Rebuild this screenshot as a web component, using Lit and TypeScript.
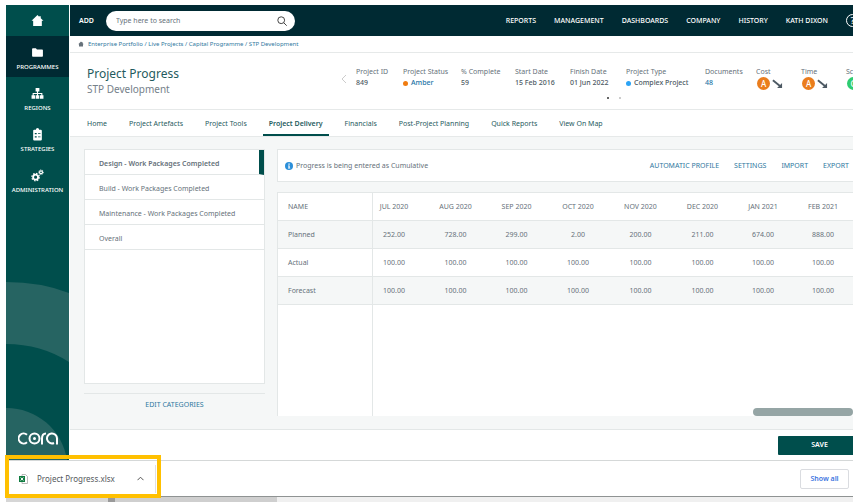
import { LitElement, html, css, svg } from "lit";
import { customElement } from "lit/decorators.js";

const homeIcon = html`<svg class="home" viewBox="0 0 24 24" aria-hidden="true"><path d="M12 2 1 12.500h3V22h16v-9.500h3L18 7.700V4h-3v1z" fill="currentColor"/></svg>`;

const icons: Record<string, unknown> = {
  PROGRAMMES: svg`<path d="M2 5.500Q2 4 3.500 4H9l2 2.500h9.500Q22 6.500 22 8v10.500q0 1.500-1.500 1.500h-17Q2 20 2 18.500z"/>`,
  REGIONS: svg`<path d="M8.500 2h7v6.500h-2.500V11h8v4h2v6.500h-6.500V15H19v-2h-6v2h2.300v6.500H8.700V15H11v-2H5v2h2.500v6.500H1V15h2v-4h8V8.500H8.500z"/>`,
  STRATEGIES: svg`<path fill-rule="evenodd" d="M6 3h3a3 3 0 0 1 6 0h3q2 0 2 2v16q0 2-2 2H6q-2 0-2-2V5q0-2 2-2zM7 9v2.500h3.500V9zM13 9.500V11h4.500V9.500zM7 15v2.500h3.500V15zM13 15.500V17h4.500v-1.500z"/>`,
  ADMINISTRATION: svg`<circle cx="8.500" cy="15" r="4.600" fill="none" stroke="currentColor" stroke-width="3.400"/><circle cx="8.500" cy="15" r="7" fill="none" stroke="currentColor" stroke-width="2.200" stroke-dasharray="2.750 2.750"/><circle cx="18.500" cy="6" r="2.700" fill="none" stroke="currentColor" stroke-width="2.300"/><circle cx="18.500" cy="6" r="4.400" fill="none" stroke="currentColor" stroke-width="1.600" stroke-dasharray="1.730 1.730"/>`,
};

const trend = html`<svg class="trend" viewBox="0 0 12 12" aria-hidden="true"><path d="M1 2.500 9 9" stroke="#4c5963" stroke-width="2" fill="none"/><path d="M11 5.500V11H5.500z" fill="#4c5963"/></svg>`;

const months = [
  { label: "JUL 2020", planned: "252.00", width: 52 },
  { label: "AUG 2020", planned: "728.00", width: 61 },
  { label: "SEP 2020", planned: "299.00", width: 61 },
  { label: "OCT 2020", planned: "2.00", width: 62 },
  { label: "NOV 2020", planned: "200.00", width: 63 },
  { label: "DEC 2020", planned: "211.00", width: 61 },
  { label: "JAN 2021", planned: "674.00", width: 60 },
  { label: "FEB 2021", planned: "888.00", width: 60 },
];

const tabs = ["Home", "Project Artefacts", "Project Tools", "Project Delivery", "Financials", "Post-Project Planning", "Quick Reports", "View On Map"];
const categories = ["Design - Work Packages Completed", "Build - Work Packages Completed", "Maintenance - Work Packages Completed", "Overall"];

@customElement("app-root")
export class AppRoot extends LitElement {
  static styles = css`
    :host { display: flex; flex-direction: column; min-height: 100vh; box-sizing: border-box; padding-top: 5px; background: #fff; color: #66717a; font: 7px/10px "Noto Sans", "Open Sans", sans-serif; overflow: hidden; position: relative; }
    * { box-sizing: border-box; }
    a { color: inherit; text-decoration: none; }
    button, input { font: inherit; color: inherit; border: 0; padding: 0; background: none; }
    button { cursor: pointer; }
    h1, p, ul, dl, dd { margin: 0; padding: 0; font-weight: 400; list-style: none; }
    .app { flex: 1; display: flex; padding-left: 6px; }
    .side { width: 63px; flex: none; background: #004e4c; color: #fff; display: flex; flex-direction: column; position: relative; overflow: hidden; font-size: 6px; font-weight: 500; }
    .side a { height: 41px; display: flex; flex-direction: column; align-items: center; padding-top: 10px; gap: 4px; line-height: 9px; z-index: 1; }
    .side .top { height: 31px; padding: 0; justify-content: center; }
    .side .active { background: #002a33; }
    .side svg { fill: currentColor; width: 13px; height: 13px; }
    .side .rings { position: absolute; left: 0; bottom: 0; width: 63px; height: 178px; }
    .side .logo { z-index: 1; margin: auto auto 14px; width: 40px; height: 16px; }
    .main { flex: 1; min-width: 0; display: flex; flex-direction: column; margin-left: 1px; }
    .bar { height: 31px; background: #002a33; color: #fff; display: flex; align-items: center; padding-left: 9px; overflow: hidden; font-weight: 600; }
    .search { display: flex; align-items: center; width: 189px; height: 20px; margin-left: 12px; padding: 0 8px 0 10px; border-radius: 10px; background: #fff; color: #66717a; font-weight: 400; flex: none; }
    .search input { flex: 1; min-width: 0; outline: 0; }
    .search input::placeholder { color: #66717a; opacity: 1; }
    .search svg { width: 10px; height: 10px; }
    .bar nav { margin: 0 -6px 0 auto; display: flex; align-items: center; gap: 18px; white-space: nowrap; font-weight: 500; }
    .help { width: 13px; height: 13px; border: 1px solid #fff; border-radius: 50%; line-height: 11px; text-align: center; font-size: 9px; }
    .crumbs { height: 17px; display: flex; align-items: center; gap: 4px; padding-left: 8px; border-bottom: 1px solid #e6e9e9; color: #2f78a0; font-size: 6px; white-space: nowrap; }
    .crumbs .home { width: 6px; height: 6px; color: #66717a; }
    .head { height: 57px; display: flex; border-bottom: 1px solid #e6e9e9; padding-left: 17px; }
    .title { width: 254px; flex: none; padding-top: 12px; }
    h1 { font-size: 12px; line-height: 17px; color: #1f5b5e; }
    .title p { font-size: 10px; line-height: 14px; color: #75818a; }
    .carousel { flex: 1; min-width: 0; overflow: hidden; padding-top: 14px; }
    .row { display: flex; align-items: center; }
    .chev { width: 15px; height: 10px; flex: none; display: flex; }
    .chev svg { width: 6px; height: 10px; }
    dl { display: grid; grid-template-columns: 47px 58px 54px 55px 56px 79px 51px 45px 45px 40px; white-space: nowrap; }
    dl div { height: 23px; }
    dd { font-weight: 500; line-height: 12px; display: flex; align-items: center; color: #4c5963; }
    dd a { color: #2474a6; }
    .dot { width: 5px; height: 5px; border-radius: 50%; margin-right: 3px; background: #f07c10; }
    .dot.blue { background: #2ba3f5; }
    .rag { width: 13px; height: 13px; margin-left: 1px; border-radius: 50%; background: #ea7d1d; color: #fff; text-align: center; line-height: 13px; font-size: 8px; font-weight: 500; }
    .rag.green { background: #2ecc71; }
    .trend { width: 11px; height: 11px; margin-left: 2px; }
    .pager { display: flex; justify-content: center; gap: 10px; padding-top: 7px; margin-left: 34px; }
    .pager i { width: 2px; height: 2px; border-radius: 50%; background: #333; }
    .pager i + i { background: #bbb; }
    .tabs { height: 27px; display: flex; gap: 22px; padding-left: 17px; border-bottom: 1px solid #e6e9e9; color: #1f5b5e; white-space: nowrap; }
    .tabs a { height: 26px; line-height: 27px; }
    .tabs .on { font-weight: 600; border-bottom: 2px solid #004e4c; margin: 0 -6px; padding: 0 6px; }
    .content { flex: 1; display: flex; gap: 12px; background: #f5f7f7; padding: 12px 0 13px 14px; }
    .left { width: 181px; flex: none; display: flex; flex-direction: column; }
    .list { flex: 1; background: #fff; border: 1px solid #e3e7e7; }
    .list button { display: block; width: 100%; height: 25px; text-align: left; padding: 3px 0 0 14px; border-bottom: 1px solid #e3e7e7; }
    .list .on { font-weight: 600; border-right: 5px solid #004e4c; }
    .edit { margin-top: 9px; border-top: 1px solid #e3e7e7; height: 23px; color: #2f78a0; font-weight: 400; }
    .right { flex: 1; min-width: 0; display: flex; flex-direction: column; gap: 10px; }
    .info { height: 33px; display: flex; align-items: center; background: #fff; border: 1px solid #e3e7e7; border-right: 0; padding: 0 4px 0 7px; white-space: nowrap; }
    .info svg { width: 8px; height: 8px; margin-right: 3px; }
    .actions { margin-left: auto; display: flex; gap: 15px; color: #2f78a0; font-weight: 400; }
    .grid { flex: 1; display: flex; flex-direction: column; background: #fff; border: 1px solid #e3e7e7; border-width: 1px 0 0 1px; }
    table { width: 100%; table-layout: fixed; border-collapse: separate; border-spacing: 0; }
    .c-name { width: 95px; }
    th, td { height: 28px; padding: 0; text-align: center; font-weight: 400; border-bottom: 1px solid #e3e7e7; white-space: nowrap; }
    tr > :first-child { text-align: left; padding-left: 10px; border-right: 1px solid #e3e7e7; }
    tr > :nth-child(2) { padding-right: 10px; }
    tbody tr:nth-child(odd) { background: #f5f7f7; }
    .rest { flex: 1; display: flex; align-items: flex-end; }
    .rest .gut { width: 95px; align-self: stretch; border-right: 1px solid #e3e7e7; }
    .thumb { margin-left: auto; width: 100px; height: 8px; border-radius: 4px; background: #95a5a5; }
    .foot { height: 31px; border-top: 1px solid #e3e7e7; display: flex; justify-content: flex-end; align-items: center; }
    .save { width: 75px; height: 19px; padding-left: 8px; background: #004e4c; color: #fff; font-weight: 600; border-radius: 1px 0 0 1px; }
    .downloads { height: 36px; flex: none; margin-left: 6px; border-top: 1px solid #d5d8d8; display: flex; align-items: center; justify-content: space-between; padding: 0 4px 0 13px; }
    .file { display: flex; align-items: center; width: 137px; height: 28px; border-right: 1px solid #e0e0e0; color: #55595d; font-size: 8px; }
    .file .xls { width: 9px; height: 10px; margin-right: 9px; }
    .file .up { width: 7px; height: 5px; margin: 0 11px 0 auto; }
    .all { width: 49px; height: 20px; border: 1px solid #dadce0; border-radius: 2px; color: #3b74e0; font-weight: 600; }
    .strip { height: 6px; flex: none; margin-left: 6px; border-top: 1px solid #8f9393; background: #f0f0f0; display: flex; }
    .strip i { width: 102px; background: #d6d6d6; }
    .strip i + i { width: 7px; background: #9a9a9a; }
    .strip i + i + i { width: 162px; background: #cfcfcf; }
    .mark { position: absolute; left: 5px; bottom: 4px; width: 156px; height: 43px; border: 4px solid #ffc000; pointer-events: none; }
  `;

  render() {
    return html`
      <div class="app">
        <nav class="side">
          <svg class="rings" viewBox="0 0 63 178" aria-hidden="true"><path d="M0 0Q35 0 63 11V80Q35 62 0 62z" fill="#266462"/><path d="M0 126A61 61 0 0 1 61 178H0z" fill="#266462"/></svg>
          <a class="top" href="#" aria-label="Home">${homeIcon}</a>
          ${Object.keys(icons).map((k, i) => html`<a href="#" class=${i ? "" : "active"}><svg viewBox="0 0 24 24" aria-hidden="true">${icons[k]}</svg>${k}</a>`)}
          <svg class="logo" viewBox="0 0 40 16" role="img" aria-label="cora"><g fill="none" stroke="#fff" stroke-width="2"><path d="M9 4.800A5 5 0 1 0 9 12.200"/><circle cx="16.500" cy="8.500" r="5"/><path d="M24 14.500V8.500Q24 3.500 28 3.500"/><path d="M36 13A5 5 0 1 1 39 8.500V14.500"/></g><circle cx="16.500" cy="8.500" r="1.500" fill="#fff"/></svg>
        </nav>
        <div class="main">
          <header class="bar">
            <a href="#">ADD</a>
            <label class="search"><input type="text" placeholder="Type here to search" aria-label="Search"><svg viewBox="0 0 10 10" aria-hidden="true"><g fill="none" stroke="#444" stroke-width="1"><circle cx="4.200" cy="4.200" r="3.400"/><path d="m6.700 6.700 3 3"/></g></svg></label>
            <nav>${["REPORTS", "MANAGEMENT", "DASHBOARDS", "COMPANY", "HISTORY", "KATH DIXON"].map((t) => html`<a href="#">${t}</a>`)}<a class="help" href="#">?</a></nav>
          </header>
          <div class="crumbs">${homeIcon}<span><a href="#">Enterprise Portfolio</a> / <a href="#">Live Projects</a> / <a href="#">Capital Programme</a> / <a href="#">STP Development</a></span></div>
          <div class="head">
            <div class="title"><h1>Project Progress</h1><p>STP Development</p></div>
            <div class="carousel">
              <div class="row">
                <button class="chev" aria-label="Previous"><svg viewBox="0 0 6 10"><path d="M5 1 1 5l4 4" fill="none" stroke="#ccc"/></svg></button>
                <dl>
                  <div><dt>Project ID</dt><dd>849</dd></div>
                  <div><dt>Project Status</dt><dd><i class="dot"></i><a href="#">Amber</a></dd></div>
                  <div><dt>% Complete</dt><dd>59</dd></div>
                  <div><dt>Start Date</dt><dd>15 Feb 2016</dd></div>
                  <div><dt>Finish Date</dt><dd>01 Jun 2022</dd></div>
                  <div><dt>Project Type</dt><dd><i class="dot blue"></i>Complex Project</dd></div>
                  <div><dt>Documents</dt><dd><a href="#">48</a></dd></div>
                  <div><dt>Cost</dt><dd><span class="rag">A</span>${trend}</dd></div>
                  <div><dt>Time</dt><dd><span class="rag">A</span>${trend}</dd></div>
                  <div><dt>Scope</dt><dd><span class="rag green">G</span></dd></div>
                </dl>
              </div>
              <div class="pager"><i></i><i></i></div>
            </div>
          </div>
          <nav class="tabs">${tabs.map((t) => html`<a href="#" class=${t === "Project Delivery" ? "on" : ""}>${t}</a>`)}</nav>
          <div class="content">
            <section class="left">
              <div class="list">${categories.map((t, i) => html`<button class=${i ? "" : "on"}>${t}</button>`)}</div>
              <button class="edit">EDIT CATEGORIES</button>
            </section>
            <section class="right">
              <div class="info"><svg viewBox="0 0 16 16" aria-hidden="true"><circle cx="8" cy="8" r="8" fill="#2b8fd9"/><path d="M6.800 3h2.600v2.400H6.800zM6 7h3.400v4.500h1V13H6v-1.500h1v-3H6z" fill="#fff"/></svg>Progress is being entered as Cumulative
                <div class="actions">${["AUTOMATIC PROFILE", "SETTINGS", "IMPORT", "EXPORT"].map((t) => html`<button>${t}</button>`)}</div>
              </div>
              <div class="grid">
                <table>
                  <colgroup><col class="c-name">${months.map((m) => html`<col style="width:${m.width}px">`)}</colgroup>
                  <thead><tr><th scope="col">NAME</th>${months.map((m) => html`<th scope="col">${m.label}</th>`)}</tr></thead>
                  <tbody>
                    <tr><th scope="row">Planned</th>${months.map((m) => html`<td>${m.planned}</td>`)}</tr>
                    ${["Actual", "Forecast"].map((n) => html`<tr><th scope="row">${n}</th>${months.map(() => html`<td>100.00</td>`)}</tr>`)}
                  </tbody>
                </table>
                <div class="rest"><div class="gut"></div><div class="thumb"></div></div>
              </div>
            </section>
          </div>
          <footer class="foot"><button class="save">SAVE</button></footer>
        </div>
      </div>
      <div class="downloads">
        <button class="file"><svg class="xls" viewBox="0 0 9 10" aria-hidden="true"><path d="M3 .5h3.500l2 2v7H3z" fill="#fff" stroke="#aaa" stroke-width=".8"/><path d="M0 2h6v6H0z" fill="#107c41"/><path d="m1.700 3.500 2.600 3m0-3-2.600 3" stroke="#fff"/></svg>Project Progress.xlsx<svg class="up" viewBox="0 0 7 5"><path d="M.5 4.200 3.500 1.200l3 3" fill="none" stroke="#555"/></svg></button>
        <button class="all">Show all</button>
      </div>
      <div class="strip"><i></i><i></i><i></i></div>
      <div class="mark"></div>
    `;
  }
}
